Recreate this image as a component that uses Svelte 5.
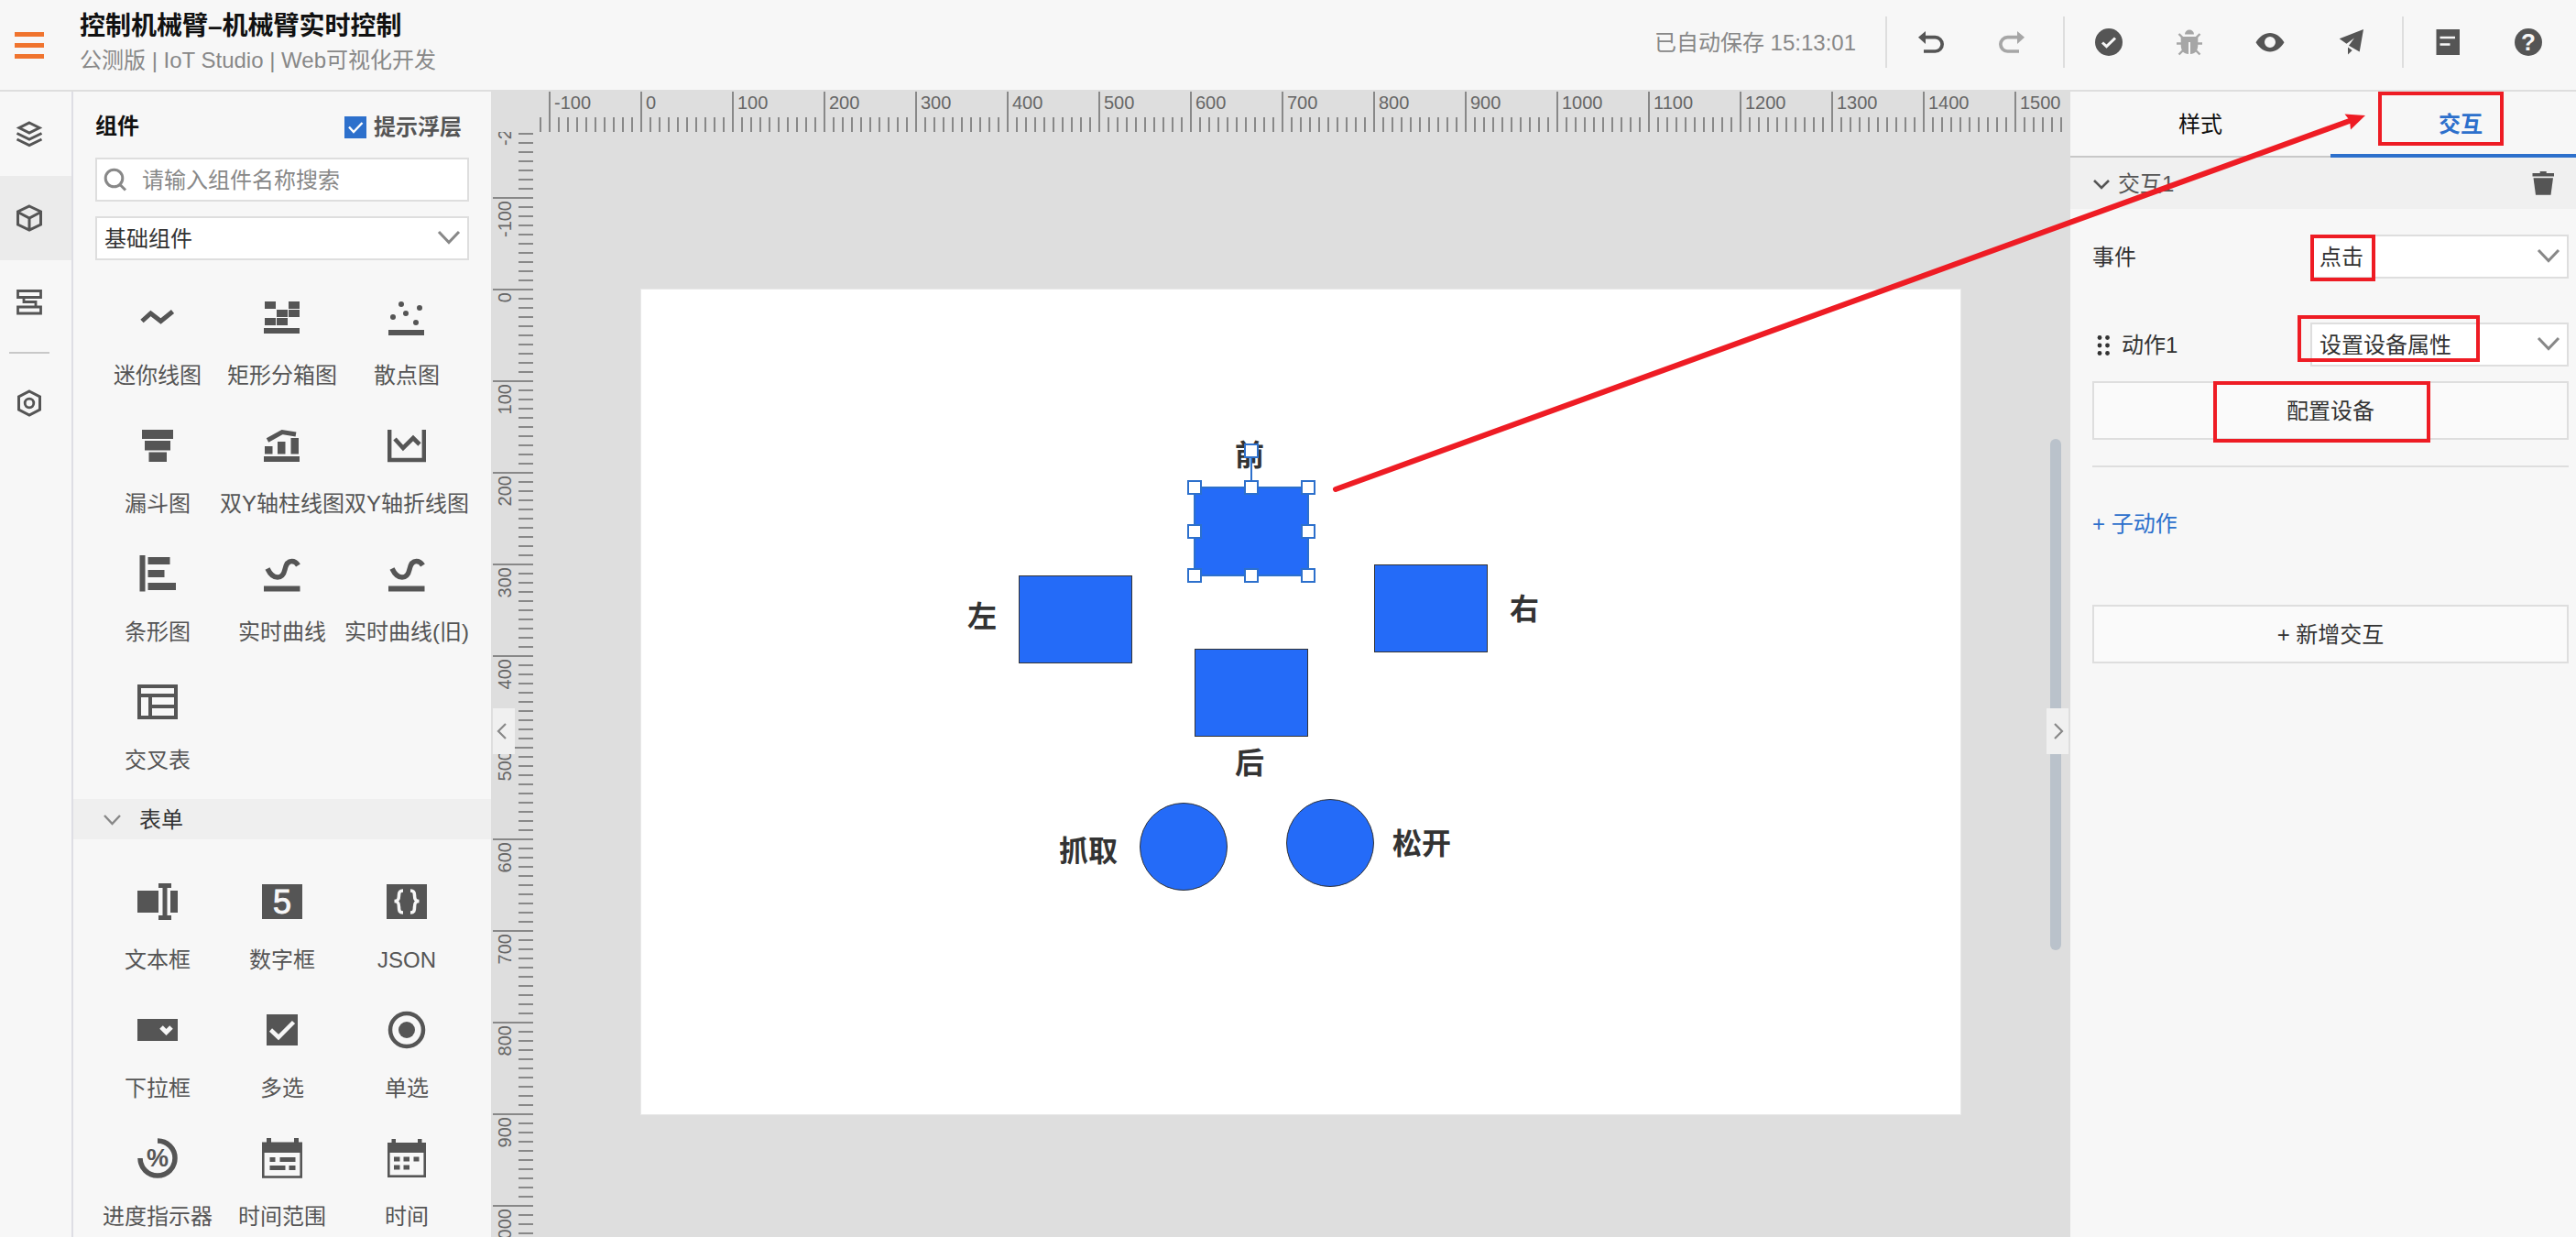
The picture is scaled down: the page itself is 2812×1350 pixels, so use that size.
<script>
  const chartItems = [
    { label: '迷你线图', icon: 'miniLine' },
    { label: '矩形分箱图', icon: 'binned' },
    { label: '散点图', icon: 'scatter' },
    { label: '漏斗图', icon: 'funnel' },
    { label: '双Y轴柱线图', icon: 'barLine' },
    { label: '双Y轴折线图', icon: 'dualLine' },
    { label: '条形图', icon: 'bars' },
    { label: '实时曲线', icon: 'curve' },
    { label: '实时曲线(旧)', icon: 'curve' },
    { label: '交叉表', icon: 'crossTable' }
  ];
  const formItems = [
    { label: '文本框', icon: 'textBox' },
    { label: '数字框', icon: 'numberBox' },
    { label: 'JSON', icon: 'json' },
    { label: '下拉框', icon: 'dropdown' },
    { label: '多选', icon: 'multi' },
    { label: '单选', icon: 'single' },
    { label: '进度指示器', icon: 'progress' },
    { label: '时间范围', icon: 'dateRange' },
    { label: '时间', icon: 'date' }
  ];

  const range = (from, to) => Array.from({ length: to - from + 1 }, (_, i) => from + i);
  const xTicks = range(-11, 155);
  const yTicks = range(-20, 110);

  const shapes = [
    { name: '前', x: 604, y: 216, w: 124, h: 96 },
    { name: '左', x: 412, y: 312, w: 124, h: 96 },
    { name: '右', x: 800, y: 300, w: 124, h: 96 },
    { name: '后', x: 604, y: 392, w: 124, h: 96 },
    { name: '抓取', x: 544, y: 560, w: 96, h: 96, round: true },
    { name: '松开', x: 704, y: 556, w: 96, h: 96, round: true }
  ];
  const labels = [
    { text: '前', x: 648, y: 165 },
    { text: '左', x: 356, y: 341 },
    { text: '右', x: 948, y: 333 },
    { text: '后', x: 648, y: 501 },
    { text: '抓取', x: 456, y: 597 },
    { text: '松开', x: 820, y: 589 }
  ];
  const handles = [
    [604, 216], [666, 216], [728, 216],
    [604, 264], [728, 264],
    [604, 312], [666, 312], [728, 312],
    [666, 176]
  ];

  let showTips = $state(true);
  let tab = $state('interact');
</script>

{#snippet glyph(name)}
  <svg class="glyph" width="48" height="48" viewBox="0 0 48 48" fill="currentColor" aria-hidden="true">
    {#if name === 'miniLine'}
      <polyline class="line" points="7,28.5 16.5,20 27.5,28.5 40.5,18" stroke-width="5" />
    {:else if name === 'binned'}
      <rect x="5" y="7" width="12" height="8" /><rect x="31" y="7" width="12" height="8" />
      <rect x="18" y="16" width="12" height="8" /><rect x="31" y="16" width="12" height="8" />
      <rect x="5" y="25" width="12" height="8" /><rect x="18" y="25" width="12" height="8" />
      <rect x="4" y="36" width="39" height="6" />
    {:else if name === 'scatter'}
      <circle cx="18" cy="10" r="3" /><circle cx="38" cy="14" r="3" /><circle cx="23" cy="20" r="3" />
      <circle cx="9" cy="24" r="3" /><circle cx="34" cy="30" r="3" />
      <rect x="4" y="38" width="39" height="6" />
    {:else if name === 'funnel'}
      <rect x="7" y="7" width="34" height="10" /><rect x="10" y="19" width="28" height="10.5" />
      <rect x="14.5" y="31.5" width="19.5" height="10.5" />
    {:else if name === 'barLine'}
      <polyline class="line" points="8,18.5 24,9.5 39,12" stroke-width="5" />
      <rect x="5" y="25" width="8.5" height="8.5" /><rect x="19" y="20" width="8.5" height="13.5" />
      <rect x="33.5" y="16" width="8.5" height="17.5" /><rect x="4" y="36" width="39" height="6" />
    {:else if name === 'dualLine'}
      <path class="line" d="M5.2 7V40H42.8V7" stroke-width="4.4" />
      <polyline class="line" points="11,17 20,27 31,16 38,23" stroke-width="4.6" />
    {:else if name === 'bars'}
      <rect x="4.5" y="4" width="6" height="39.5" /><rect x="13.5" y="6" width="24" height="8" />
      <rect x="13.5" y="20" width="18" height="8" /><rect x="13.5" y="34" width="30.5" height="8" />
    {:else if name === 'curve'}
      <path class="line" d="M8 18.5C11 25 15 28 19 28C24 28 26 24 27 19.5C28 14.5 30 10.5 34.5 10.5C38 10.5 40 12.5 41.5 15" stroke-width="5.5" />
      <rect x="4" y="37.5" width="39.5" height="6" />
    {:else if name === 'crossTable'}
      <path class="line" d="M4 7H44V41H4ZM4 17H44M16 17V41M16 29H44" stroke-width="4" />
    {:else if name === 'textBox'}
      <rect x="2" y="12" width="23" height="24" /><rect x="38" y="12" width="8" height="24" />
      <path d="M25 4H39V9H34.5V39H39V44H25V39H29.5V9H25Z" />
    {:else if name === 'numberBox'}
      <rect x="2" y="5" width="44" height="38" />
      <text x="24" y="37" class="digit">5</text>
    {:else if name === 'json'}
      <rect x="2" y="5" width="44" height="38" />
      <path class="cut" d="M20 12C16 12 15.5 14 15.5 17C15.5 21 15 23.5 10.5 23.5C15 23.5 15.5 26 15.5 30C15.5 34 16 36 20 36M28 12C32 12 32.5 14 32.5 17C32.5 21 33 23.5 37.5 23.5C33 23.5 32.5 26 32.5 30C32.5 34 32 36 28 36" stroke-width="3.6" />
    {:else if name === 'dropdown'}
      <rect x="2" y="12" width="44" height="24" />
      <polyline class="cut" points="28,21 33.5,26.5 39,21" stroke-width="5" />
    {:else if name === 'multi'}
      <rect x="7" y="7" width="34" height="34" />
      <polyline class="cut" points="11.5,24 20,32 36.5,15.5" stroke-width="4.5" />
    {:else if name === 'single'}
      <circle class="line" cx="24" cy="24" r="18" stroke-width="4.5" /><circle cx="24" cy="24" r="9" />
    {:else if name === 'progress'}
      <path class="line" d="M24 5A19 19 0 1 1 5 24" stroke-width="5.5" />
      <text x="24" y="33" class="percent">%</text>
    {:else if name === 'dateRange'}
      <rect x="7" y="2" width="5" height="6" /><rect x="37" y="2" width="5" height="6" />
      <rect x="2" y="6.5" width="44" height="11.5" />
      <rect class="line" x="3.3" y="9" width="41.4" height="35.5" stroke-width="2.6" />
      <rect x="10.5" y="23" width="6" height="5" /><rect x="21.5" y="23" width="17" height="5" />
      <rect x="10.5" y="32" width="17" height="5" /><rect x="31.5" y="32" width="7" height="5" />
    {:else if name === 'date'}
      <rect x="7.5" y="3" width="4.5" height="6" /><rect x="36" y="3" width="4.5" height="6" />
      <rect x="3" y="7" width="42" height="11" />
      <rect class="line" x="4.3" y="9" width="39.4" height="34.7" stroke-width="2.6" />
      <rect x="10" y="22.5" width="6.5" height="5" /><rect x="20.5" y="22.5" width="6.5" height="5" />
      <rect x="31.5" y="22.5" width="6" height="5" />
      <rect x="10" y="31.5" width="6.5" height="5" /><rect x="20.5" y="31.5" width="6.5" height="5" />
    {/if}
  </svg>
{/snippet}

{#snippet chevron()}
  <svg class="chevron" width="28" height="28" viewBox="0 0 28 28" aria-hidden="true">
    <polyline points="3,7 14,18.5 25,7" fill="none" stroke="#888" stroke-width="3" />
  </svg>
{/snippet}

<div class="app">
  <header class="topbar">
    <button class="menu" aria-label="菜单"><span></span><span></span><span></span></button>
    <div class="titles">
      <h1>控制机械臂–机械臂实时控制</h1>
      <p>公测版 | IoT Studio | Web可视化开发</p>
    </div>
    <span class="saved">已自动保存 15:13:01</span>
    <i class="sep"></i>
    <button class="tool" aria-label="撤销">
      <svg width="32" height="32" viewBox="0 0 32 32"><path d="M2 10.7L10 4V18Z" fill="currentColor" /><path class="line" d="M9 10.7H20.5A7.6 7.6 0 0 1 20.5 26H8" stroke-width="3.7" /></svg>
    </button>
    <button class="tool dim" aria-label="重做">
      <svg width="32" height="32" viewBox="0 0 32 32"><path d="M30 10.7L22 4V18Z" fill="currentColor" /><path class="line" d="M23 10.7H11.5A7.6 7.6 0 0 0 11.5 26H24" stroke-width="3.7" /></svg>
    </button>
    <i class="sep"></i>
    <button class="tool" aria-label="校验">
      <svg width="32" height="32" viewBox="0 0 32 32"><circle cx="16" cy="16" r="15" fill="currentColor" /><polyline class="cut" points="9,16.5 13.5,20.7 23,11.5" stroke-width="3" /></svg>
    </button>
    <button class="tool dim" aria-label="调试">
      <svg width="32" height="32" viewBox="0 0 32 32" fill="currentColor"><path d="M11 7.5A5 5 0 0 1 21 7.5Z" /><path d="M6.7 10H25.3V19C25.3 25.5 22 29 17 29V16H15V29C10 29 6.7 25.5 6.7 19Z" /><path class="line" d="M4.5 7L9 11.5M27.5 7L23 11.5M2 17.5H8M24 17.5H30M4.5 29.5L9 25M27.5 29.5L23 25" stroke-width="2.4" /></svg>
    </button>
    <button class="tool" aria-label="预览">
      <svg width="32" height="32" viewBox="0 0 32 32" fill="currentColor"><path fill-rule="evenodd" d="M.5 16.2C5 9.5 10 6 16 6S27 9.5 31.5 16.2C27 23 22 26.4 16 26.4S5 23 .5 16.2ZM16 10A6 6 0 1 0 16 22A6 6 0 1 0 16 10Z" /></svg>
    </button>
    <button class="tool" aria-label="发布">
      <svg width="32" height="32" viewBox="0 0 32 32" fill="currentColor"><path d="M30 2L25.7 26.5L14 19.7L20 11.5L11.5 17.7L3.7 12.3Z" /><path d="M13 21.5L17.7 25L13 29.5Z" /></svg>
    </button>
    <i class="sep"></i>
    <button class="tool" aria-label="文档">
      <svg width="32" height="32" viewBox="0 0 32 32"><rect x="3.5" y="2" width="25.5" height="28" fill="currentColor" /><path class="cut" d="M7.5 11H24M7.5 18.5H18.5" stroke-width="2.6" /></svg>
    </button>
    <button class="tool" aria-label="帮助">
      <svg width="32" height="32" viewBox="0 0 32 32"><circle cx="16" cy="16" r="15" fill="currentColor" /><text x="16" y="25" class="question">?</text></svg>
    </button>
  </header>

  <div class="body">
    <nav class="rail">
      <button aria-label="图层">
        <svg width="32" height="32" viewBox="0 0 32 32"><path class="line" d="M16 4L27 9.5L16 15L5 9.5ZM2.5 15.5L16 22L29.5 15.5M2.5 22L16 28.5L29.5 22" stroke-width="3" /></svg>
      </button>
      <button class="active" aria-label="组件">
        <svg width="32" height="32" viewBox="0 0 32 32"><path class="line" d="M16 3L28.5 9V23L16 29L3.5 23V9ZM3.5 9.5L16 16L28.5 9.5M16 16V29" stroke-width="3" /></svg>
      </button>
      <button aria-label="页面结构">
        <svg width="32" height="32" viewBox="0 0 32 32"><path class="line" d="M3.5 3.5H28.5V10.5H3.5ZM3.5 21H28.5V28H3.5ZM10 11V15.5H23V21" stroke-width="2.8" /></svg>
      </button>
      <hr />
      <button aria-label="设置">
        <svg width="32" height="32" viewBox="0 0 32 32"><path class="line" d="M16 3L27.5 9V23L16 29L4.5 23V9Z" stroke-width="3" /><circle class="line" cx="16" cy="16" r="4.8" stroke-width="2.8" /></svg>
      </button>
    </nav>

    <aside class="library">
      <div class="library-top">
        <div class="library-head">
          <h2>组件</h2>
          <label class="tips">
            <span class="check">
              <input type="checkbox" bind:checked={showTips} />
              <svg width="24" height="24" viewBox="0 0 24 24" aria-hidden="true"><polyline points="5,11.5 10,17 19.5,7" fill="none" stroke="#fff" stroke-width="2.4" /></svg>
            </span>
            提示浮层
          </label>
        </div>
        <div class="search">
          <svg width="32" height="32" viewBox="0 0 32 32" aria-hidden="true"><g fill="none" stroke="#888" stroke-width="3"><circle cx="14.5" cy="14.5" r="9.3" /><path d="M21 21.5L27 27.5" /></g></svg>
          <input type="text" placeholder="请输入组件名称搜索" aria-label="搜索组件" />
        </div>
        <div class="select">
          <select aria-label="组件分类"><option>基础组件</option></select>
          {@render chevron()}
        </div>
      </div>
      <div class="items">
        {#each chartItems as item}
          <button class="item">{@render glyph(item.icon)}<span>{item.label}</span></button>
        {/each}
      </div>
      <button class="group">
        <svg width="24" height="24" viewBox="0 0 24 24" aria-hidden="true"><polyline points="4,7 12.5,16 21,7" fill="none" stroke="#888" stroke-width="2.4" /></svg>
        表单
      </button>
      <div class="items form-items">
        {#each formItems as item}
          <button class="item">{@render glyph(item.icon)}<span>{item.label}</span></button>
        {/each}
      </div>
    </aside>

    <main class="canvas">
      <svg class="ruler ruler-x" aria-hidden="true">
        {#each xTicks as t}
          <line x1={118 + t * 10} x2={118 + t * 10} y1={t % 10 ? 28 : 0} y2="44" />
          {#if t % 10 === 0}<text x={123 + t * 10} y="19">{t * 10}</text>{/if}
        {/each}
      </svg>
      <svg class="ruler ruler-y" aria-hidden="true">
        {#each yTicks as t}
          <line x1={t % 10 ? 30 : 2} x2="46" y1={172 + t * 10} y2={172 + t * 10} />
          {#if t % 10 === 0}<text text-anchor="end" transform="translate(22 {175 + t * 10}) rotate(-90)">{t * 10}</text>{/if}
        {/each}
      </svg>
      <div class="stage">
        <div class="board">
          {#each labels as l}
            <span class="caption" style="left:{l.x}px;top:{l.y}px">{l.text}</span>
          {/each}
          {#each shapes as s}
            <button class="shape" class:round={s.round} aria-label={s.name} style="left:{s.x}px;top:{s.y}px;width:{s.w}px;height:{s.h}px"></button>
          {/each}
          <svg class="selection" width="1440" height="900" viewBox="0 0 1440 900" aria-hidden="true">
            <rect class="frame" x="604" y="216" width="124" height="96" />
            <line x1="666" y1="176" x2="666" y2="216" />
            {#each handles as [x, y]}
              <rect class="handle" x={x - 7} y={y - 7} width="14" height="14" />
            {/each}
          </svg>
        </div>
      </div>
      <div class="scroll-thumb"></div>
      <button class="fold fold-left" aria-label="收起左侧面板">
        <svg width="24" height="24" viewBox="0 0 24 24"><polyline points="14,4 6,12 14,20" fill="none" stroke="#888" stroke-width="2.2" /></svg>
      </button>
      <button class="fold fold-right" aria-label="收起右侧面板">
        <svg width="24" height="24" viewBox="0 0 24 24"><polyline points="9,4 17,12 9,20" fill="none" stroke="#888" stroke-width="2.2" /></svg>
      </button>
    </main>

    <aside class="inspector">
      <div class="tabs" role="tablist">
        <button role="tab" aria-selected={tab === 'style'} class:active={tab === 'style'} onclick={() => (tab = 'style')}>样式</button>
        <button role="tab" aria-selected={tab === 'interact'} class:active={tab === 'interact'} onclick={() => (tab = 'interact')}>交互</button>
      </div>
      <div class="rule-head">
        <button class="rule-toggle">
          <svg width="24" height="24" viewBox="0 0 24 24" aria-hidden="true"><polyline points="4,8 12,16 20,8" fill="none" stroke="#555" stroke-width="2.6" /></svg>
          交互1
        </button>
        <button class="trash" aria-label="删除">
          <svg width="32" height="32" viewBox="0 0 32 32" fill="currentColor"><rect x="12.7" y="3" width="7" height="3" /><rect x="4.5" y="5" width="23.5" height="3.5" /><path d="M5.5 10.3H27L24.5 28.7H8Z" /></svg>
        </button>
      </div>
      <div class="form">
        <div class="field">
          <label for="event">事件</label>
          <div class="select">
            <select id="event"><option>点击</option></select>
            {@render chevron()}
          </div>
        </div>
        <div class="field action">
          <svg width="24" height="24" viewBox="0 0 24 24" fill="#333" aria-hidden="true">
            {#each [4.5, 13, 21.5] as y}<circle cx="8" cy={y} r="2.4" /><circle cx="16.5" cy={y} r="2.4" />{/each}
          </svg>
          <label for="action">动作1</label>
          <div class="select">
            <select id="action"><option>设置设备属性</option></select>
            {@render chevron()}
          </div>
        </div>
        <button class="wide">配置设备</button>
        <hr />
        <a href="#sub-action">+ 子动作</a>
        <button class="wide">+ 新增交互</button>
      </div>
    </aside>
  </div>

  <svg class="notes" width="1412" height="600" viewBox="1400 0 1412 600" aria-hidden="true">
    <g fill="none" stroke="#ee1c24" stroke-width="4">
      <rect x="2598" y="102" width="133" height="55" />
      <rect x="2524" y="258" width="67" height="47" />
      <rect x="2510" y="346" width="195" height="47" />
      <rect x="2418" y="418" width="233" height="63" />
      <path d="M1458 534L2566 131.5" stroke-width="6" stroke-linecap="round" />
    </g>
    <path d="M2582 126L2559.5 124.5L2565 131.5L2566 141.5Z" fill="#ee1c24" />
  </svg>
</div>

<style>
  :global(body) {
    margin: 0;
  }
  .app {
    position: relative;
    display: flex;
    flex-direction: column;
    height: 100vh;
    overflow: hidden;
    background: #f7f7f7;
    color: #555;
    font: 24px/32px 'Liberation Sans', 'Noto Sans CJK SC', sans-serif;
  }
  .app * {
    box-sizing: border-box;
  }
  button {
    margin: 0;
    padding: 0;
    border: 0;
    background: none;
    color: inherit;
    font: inherit;
    cursor: pointer;
  }
  svg {
    display: block;
    flex: none;
  }
  .line {
    fill: none;
    stroke: currentColor;
  }
  .cut {
    fill: none;
    stroke: #f7f7f7;
  }
  .digit,
  .percent,
  .question {
    text-anchor: middle;
  }
  .digit {
    font-size: 36px;
    fill: #f7f7f7;
    stroke: #f7f7f7;
  }
  .percent {
    font-size: 27px;
    font-weight: 700;
  }
  .question {
    font-size: 26px;
    font-weight: 700;
    fill: #f7f7f7;
  }

  .topbar {
    flex: none;
    display: flex;
    align-items: center;
    height: 100px;
    padding: 0 8px 6px 16px;
    border-bottom: 2px solid #dedede;
  }
  .menu {
    display: flex;
    flex-direction: column;
    gap: 7px;
    width: 32px;
    margin: 6px 39px 0 0;
  }
  .menu span {
    height: 5px;
    background: #f0742e;
  }
  .titles {
    flex: 1;
  }
  h1,
  h2,
  p {
    margin: 0;
    white-space: nowrap;
  }
  h1 {
    color: #111;
    font-size: 28px;
    line-height: 40px;
    font-weight: 700;
  }
  p {
    color: #888;
    line-height: 34px;
  }
  .saved {
    margin: 2px 20px 0 0;
    color: #888;
    white-space: nowrap;
  }
  .sep {
    width: 2px;
    height: 56px;
    margin: 0 4px 0 12px;
    background: #dedede;
  }
  .tool {
    display: grid;
    place-items: center;
    width: 88px;
    height: 56px;
  }
  .dim {
    color: #a6a6a6;
  }

  .body {
    flex: 1;
    min-height: 0;
    display: flex;
  }
  .rail {
    flex: none;
    width: 80px;
    border-right: 2px solid #dedee4;
  }
  .rail button {
    display: block;
    width: 100%;
    height: 92px;
    padding-left: 16px;
  }
  .rail .active {
    background: #ebebeb;
  }
  .rail hr {
    width: 44px;
    height: 2px;
    margin: 8px 0 8px 10px;
    border: 0;
    background: #c8c8c8;
  }

  .library {
    flex: none;
    width: 456px;
    overflow: hidden;
  }
  .library-top {
    padding: 0 24px;
  }
  .library-head {
    display: flex;
    align-items: center;
    justify-content: space-between;
    height: 72px;
    padding: 4px 8px 0 0;
  }
  h2 {
    color: #111;
    font-size: 24px;
    font-weight: 700;
  }
  .tips {
    display: flex;
    align-items: center;
    gap: 8px;
    padding-top: 2px;
    font-weight: 700;
  }
  .check {
    position: relative;
    width: 24px;
    height: 24px;
  }
  .check input {
    display: block;
    appearance: none;
    width: 24px;
    height: 24px;
    margin: 0;
    background: #2d70cc;
  }
  .check svg {
    position: absolute;
    inset: 0;
    pointer-events: none;
  }
  .search {
    display: flex;
    align-items: center;
    gap: 13px;
    height: 48px;
    margin-bottom: 16px;
    padding-left: 4px;
    border: 2px solid #dedede;
    background: #fff;
  }
  .search input {
    flex: 1;
    min-width: 0;
    padding: 2px 0 0;
    border: 0;
    outline: 0;
    background: none;
    color: #333;
    font: inherit;
  }
  .search input::placeholder {
    color: #888;
    opacity: 1;
  }
  .select {
    position: relative;
    height: 48px;
  }
  select {
    appearance: none;
    display: block;
    width: 100%;
    height: 48px;
    padding: 2px 40px 0 8px;
    border: 2px solid #dedede;
    border-radius: 0;
    background: #fff;
    color: #333;
    font: inherit;
  }
  .chevron {
    position: absolute;
    top: 10px;
    right: 8px;
    pointer-events: none;
  }
  .items {
    display: grid;
    grid-template-columns: repeat(3, 136px);
    grid-auto-rows: 140px;
    padding: 20px 24px 8px;
  }
  .form-items {
    padding-top: 26px;
  }
  .item {
    display: flex;
    flex-direction: column;
    align-items: center;
    gap: 24px;
    padding-top: 18px;
    white-space: nowrap;
  }
  .group {
    display: flex;
    align-items: center;
    gap: 18px;
    width: 100%;
    height: 44px;
    padding: 2px 0 0 30px;
    background: #efefef;
    color: #333;
  }

  .canvas {
    position: relative;
    flex: 1;
    min-width: 0;
    display: grid;
    grid-template: 44px minmax(0, 1fr) / 46px minmax(0, 1fr);
    background: #dedede;
  }
  .ruler {
    width: 100%;
    height: 100%;
    overflow: hidden;
  }
  .ruler-x {
    grid-area: 1 / 2;
  }
  .ruler-y {
    grid-area: 2 / 1;
  }
  .ruler line {
    stroke: #888;
    stroke-width: 2;
    shape-rendering: crispEdges;
  }
  .ruler text {
    fill: #666;
    font-size: 20px;
  }
  .stage {
    grid-area: 2 / 2;
    overflow: hidden;
  }
  .board {
    position: relative;
    width: 1440px;
    height: 900px;
    margin: 172px 0 0 118px;
    background: #fff;
    box-shadow: 0 0 0 1px #e8e8e8;
  }
  .shape {
    position: absolute;
    border: 1px solid #333;
    background: #246bf8;
  }
  .round {
    border-radius: 50%;
  }
  .caption {
    position: absolute;
    color: #333;
    font-size: 32px;
    line-height: 32px;
    font-weight: 700;
    white-space: nowrap;
  }
  .selection {
    position: absolute;
    inset: 0;
    pointer-events: none;
  }
  .selection rect,
  .selection line {
    stroke: #2d70cc;
    stroke-width: 2;
  }
  .frame {
    fill: none;
  }
  .handle {
    fill: #fff;
  }
  .scroll-thumb {
    position: absolute;
    top: 379px;
    right: 10px;
    width: 12px;
    height: 558px;
    border-radius: 6px;
    background: #bac2cb;
  }
  .fold {
    position: absolute;
    top: 673px;
    display: grid;
    place-items: center;
    width: 24px;
    height: 50px;
    background: #f0f0f0;
  }
  .fold-left {
    left: 2px;
  }
  .fold-right {
    right: 2px;
  }

  .inspector {
    flex: none;
    width: 552px;
    overflow: hidden;
  }
  .tabs {
    display: flex;
    height: 72px;
  }
  .tabs button {
    flex: none;
    width: 284px;
    padding-top: 2px;
    border-bottom: 2px solid #c8c8c8;
    color: #111;
  }
  .tabs .active {
    padding-top: 4px;
    border-bottom: 4px solid #2d70cc;
    color: #2d70cc;
    font-weight: 700;
  }
  .rule-head {
    display: flex;
    align-items: center;
    justify-content: space-between;
    height: 56px;
    padding: 0 20px 0 22px;
    background: #f0f0f0;
  }
  .rule-toggle {
    display: flex;
    align-items: center;
    gap: 6px;
    padding-top: 2px;
  }
  .form {
    padding: 28px 8px 0 24px;
    color: #333;
  }
  .field {
    display: flex;
    align-items: center;
    margin-bottom: 48px;
  }
  .field label {
    flex: 1;
    padding-top: 2px;
  }
  .field .select {
    width: 282px;
  }
  .action {
    gap: 8px;
    margin-bottom: 16px;
  }
  .wide {
    display: block;
    width: 100%;
    height: 64px;
    padding-top: 2px;
    border: 2px solid #dedede;
    background: #fafafa;
  }
  .form hr {
    height: 2px;
    margin: 28px 0 44px;
    border: 0;
    background: #dedede;
  }
  .form a {
    display: block;
    width: max-content;
    padding-top: 2px;
    margin-bottom: 72px;
    color: #2d70cc;
    text-decoration: none;
  }
  .notes {
    position: absolute;
    top: 0;
    right: 0;
    pointer-events: none;
  }
</style>
